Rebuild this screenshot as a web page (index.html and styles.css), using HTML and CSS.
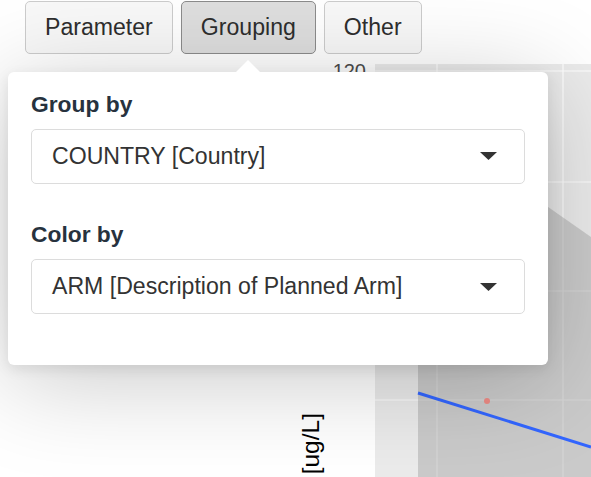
FILE: index.html
```html
<!DOCTYPE html>
<html lang="en">
<head>
<meta charset="utf-8">
<title>Grouping</title>
<link rel="stylesheet" href="styles.css">
</head>
<body>
<div class="page">
  <nav class="tabs">
    <button class="tab">Parameter</button>
    <button class="tab tab-active">Grouping</button>
    <button class="tab">Other</button>
  </nav>
  <figure class="plot">
    <svg class="plot-svg" width="591" height="423" viewBox="0 54 591 423" xmlns="http://www.w3.org/2000/svg">
      <rect x="375" y="64" width="216" height="413" fill="#ebebeb"/>
      <g stroke="#ffffff" stroke-width="1.2">
        <line x1="375" y1="71" x2="591" y2="71"/>
        <line x1="375" y1="182" x2="591" y2="182"/>
        <line x1="375" y1="291" x2="591" y2="291"/>
        <line x1="375" y1="400" x2="591" y2="400"/>
        <line x1="437" y1="64" x2="437" y2="477"/>
        <line x1="563" y1="64" x2="563" y2="477"/>
      </g>
      <polygon points="418,116 591,237 591,700 418,700" fill="#999999" fill-opacity="0.4"/>
      <line x1="418" y1="393" x2="591" y2="447" stroke="#3366ff" stroke-width="3"/>
      <circle cx="487" cy="401" r="3" fill="#f8766d" fill-opacity="0.75"/>
      <text x="366" y="78" text-anchor="end" class="axis-text">120</text>
      <text transform="translate(319,413) rotate(-90)" text-anchor="end" class="axis-title">[ug/L]</text>
    </svg>
  </figure>
  <div class="popover">
    <div class="field">
      <div class="field-label">Group by</div>
      <div class="select">
        <span class="select-value">COUNTRY [Country]</span>
        <svg class="caret" width="17" height="8" viewBox="0 0 17 8"><polygon points="0,0 17,0 8.5,8" fill="#333"/></svg>
      </div>
    </div>
    <div class="field field-second">
      <div class="field-label">Color by</div>
      <div class="select">
        <span class="select-value">ARM [Description of Planned Arm]</span>
        <svg class="caret" width="17" height="8" viewBox="0 0 17 8"><polygon points="0,0 17,0 8.5,8" fill="#333"/></svg>
      </div>
    </div>
  </div>
</div>
</body>
</html>
```

FILE: styles.css
```css
html, body {
  margin: 0;
  padding: 0;
  background: #ffffff;
}
body {
  font-family: "Liberation Sans", Arial, sans-serif;
  width: 591px;
  height: 477px;
  overflow: hidden;
}
.page {
  position: relative;
  width: 591px;
  height: 477px;
}
.tabs {
  display: flex;
  gap: 8px;
  padding: 1px 0 0 25px;
}
.tab {
  height: 53px;
  padding: 0 19px;
  font-family: "Liberation Sans", Arial, sans-serif;
  font-size: 23.1px;
  color: #2e2e2e;
  background: #f8f8f8;
  border: 1px solid #cccccc;
  border-radius: 5px;
}
.tab-active {
  background: #dedede;
  border-color: #8c8c8c;
}
.plot {
  margin: 0;
}
.plot-svg {
  display: block;
}
.axis-text {
  font-family: "Liberation Sans", Arial, sans-serif;
  font-size: 20px;
  fill: #4d4d4d;
}
.axis-title {
  font-family: "Liberation Sans", Arial, sans-serif;
  font-size: 24.5px;
  fill: #000000;
}
.popover {
  position: absolute;
  left: 8px;
  top: 72px;
  width: 540px;
  box-sizing: border-box;
  padding: 17.5px 23px 50.5px 23px;
  background: #ffffff;
  border-radius: 6px;
  box-shadow: 0 4px 14px rgba(0, 0, 0, 0.09), 0 14px 100px rgba(0, 0, 0, 0.22);
}
.popover::before {
  content: "";
  position: absolute;
  left: 228px;
  top: -12px;
  border-left: 12px solid transparent;
  border-right: 12px solid transparent;
  border-bottom: 12px solid #ffffff;
}
.field-second {
  margin-top: 36.5px;
}
.field-label {
  font-weight: bold;
  font-size: 22.8px;
  line-height: 28px;
  color: #27323e;
  margin-bottom: 11px;
}
.select {
  height: 55px;
  box-sizing: border-box;
  border: 1px solid #dcdcdc;
  border-radius: 5px;
  padding: 0 27px 0 20px;
  display: flex;
  align-items: center;
  justify-content: space-between;
  font-size: 23.1px;
  color: #333333;
}
.caret {
  display: block;
}
```
